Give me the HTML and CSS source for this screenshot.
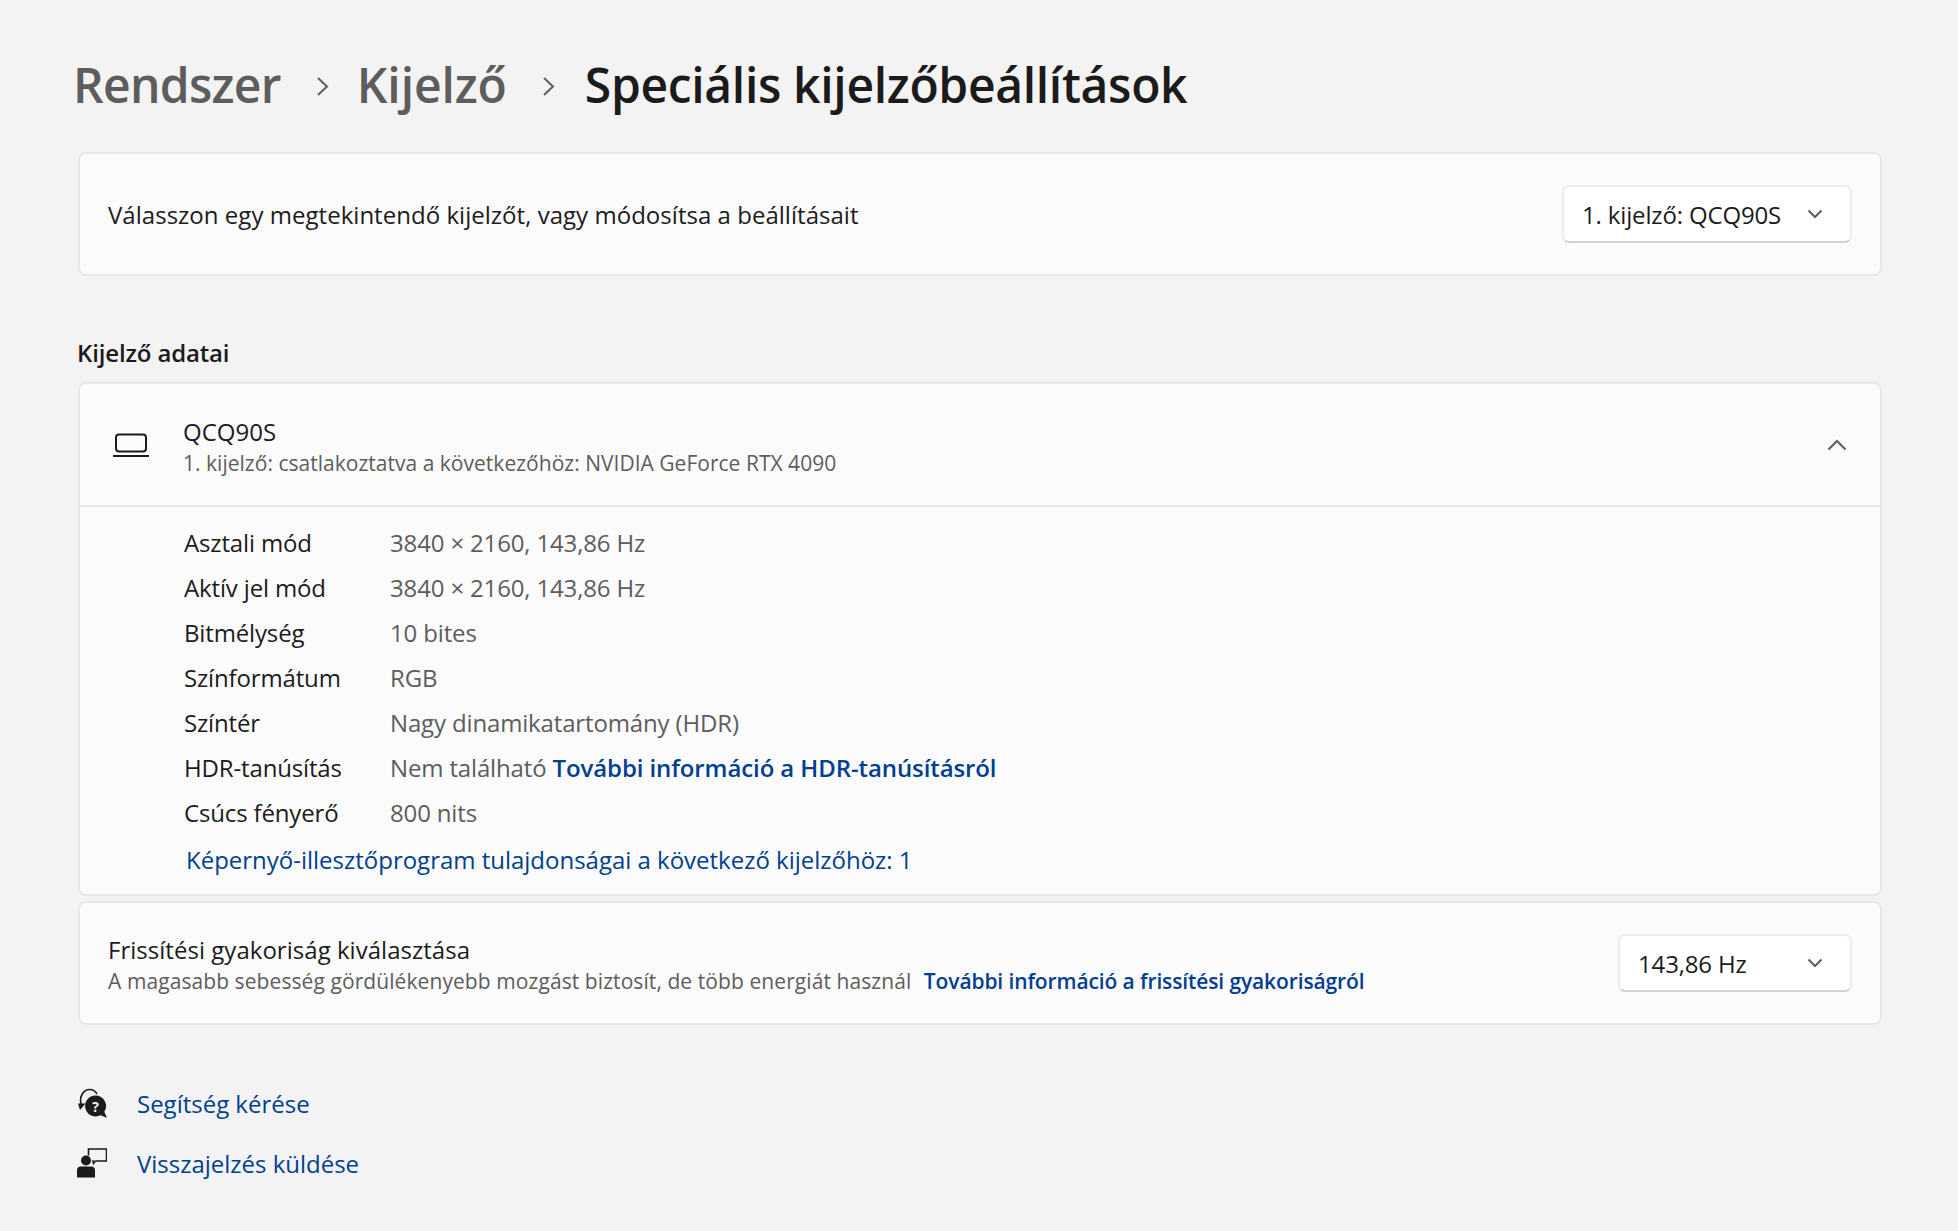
FILE: index.html
```html
<!DOCTYPE html>
<html lang="hu">
<head>
<meta charset="utf-8">
<title>Speciális kijelzőbeállítások</title>
<link rel="stylesheet" href="styles.css">
</head>
<body>
<main class="page">
  <nav class="crumbs">
    <span class="crumb crumb-root">Rendszer</span>
    <svg class="crumb-sep" viewBox="0 0 13 21"><path d="M2 2l9 8.500-9 8.500"/></svg>
    <span class="crumb crumb-mid">Kijelző</span>
    <svg class="crumb-sep" viewBox="0 0 13 21"><path d="M2 2l9 8.500-9 8.500"/></svg>
    <span class="crumb current">Speciális kijelzőbeállítások</span>
  </nav>

  <section class="card row-card">
    <span class="label">Válasszon egy megtekintendő kijelzőt, vagy módosítsa a beállításait</span>
    <div class="select select-display">
      <span>1. kijelző: QCQ90S</span>
      <svg class="chev" viewBox="0 0 16 10"><path d="M1.500 1.500L8 8l6.500-6.500"/></svg>
    </div>
  </section>

  <h2 class="section-title">Kijelző adatai</h2>

  <section class="card info-card">
    <header class="info-head">
      <svg class="laptop" viewBox="0 0 36 24"><rect x="3" y="1.500" width="30" height="17" rx="3"/><path d="M0 23h36"/></svg>
      <div class="info-titles">
        <div class="label">QCQ90S</div>
        <div class="sub">1. kijelző: csatlakoztatva a következőhöz: NVIDIA GeForce RTX 4090</div>
      </div>
      <svg class="chev chev-up" viewBox="0 0 20 12"><path d="M1.500 10.500L10 2l8.500 8.500"/></svg>
    </header>
    <div class="info-body">
      <dl class="specs">
        <dt>Asztali mód</dt><dd>3840 × 2160, 143,86 Hz</dd>
        <dt>Aktív jel mód</dt><dd>3840 × 2160, 143,86 Hz</dd>
        <dt>Bitmélység</dt><dd>10 bites</dd>
        <dt>Színformátum</dt><dd>RGB</dd>
        <dt>Színtér</dt><dd>Nagy dinamikatartomány (HDR)</dd>
        <dt>HDR-tanúsítás</dt><dd>Nem található <a class="strong-link" href="#">További információ a HDR-tanúsításról</a></dd>
        <dt>Csúcs fényerő</dt><dd>800 nits</dd>
      </dl>
      <a class="link driver-link" href="#">Képernyő-illesztőprogram tulajdonságai a következő kijelzőhöz: 1</a>
    </div>
  </section>

  <section class="card row-card refresh-card">
    <div class="refresh-text">
      <div class="label">Frissítési gyakoriság kiválasztása</div>
      <div class="sub">A magasabb sebesség gördülékenyebb mozgást biztosít, de több energiát használ <a class="strong-link sub-link" href="#">További információ a frissítési gyakoriságról</a></div>
    </div>
    <div class="select select-rate">
      <span>143,86 Hz</span>
      <svg class="chev" viewBox="0 0 16 10"><path d="M1.500 1.500L8 8l6.500-6.500"/></svg>
    </div>
  </section>

  <ul class="help">
    <li>
      <svg class="help-icon" viewBox="0 0 30 30">
        <path class="line thin" d="M4 16C2 8 7 1.500 12.500 1.500c3.500 0 6 1.700 7.500 4.500"/>
        <path class="solid" d="M1 15.500h7.500L3 22z"/>
        <path class="solid" d="M18.500 7.500a10.500 10.500 0 0 1 8.800 16.200l2.700 6-6.500-2.400a10.500 10.500 0 1 1-5-19.800z"/>
        <text class="q" x="18.500" y="23.500">?</text>
      </svg>
      <a class="link" href="#">Segítség kérése</a>
    </li>
    <li>
      <svg class="help-icon" viewBox="0 0 30 30">
        <circle class="solid" cx="9" cy="12.500" r="5"/>
        <path class="solid" d="M0 29.500v-7a4 4 0 0 1 4-4h10a4 4 0 0 1 4 4v7z"/>
        <path class="line thin" d="M11.500 7.500V1h18v12H18.500l-2 2.500-.7-3.500"/>
      </svg>
      <a class="link" href="#">Visszajelzés küldése</a>
    </li>
  </ul>
</main>
</body>
</html>
```

FILE: styles.css
```css
* { box-sizing: border-box; }
html, body { margin: 0; background: #f3f3f3; }
body {
  font-family: "Open Sans", "Noto Sans", sans-serif;
  font-size: 24px;
  color: #1b1b1b;
  height: 1231px;
  overflow: hidden;
}
.page { padding: 49px 76px 0 78px; }
.crumbs {
  display: flex;
  align-items: center;
  height: 70px;
  margin-left: -5px;
  margin-bottom: 33px;
  font-size: 48px;
  font-weight: 600;
  color: #5d5d5d;
}
.crumb { white-space: nowrap; }
.crumb-root { letter-spacing: -0.7px; }
.crumb-mid { letter-spacing: -0.1px; }
.crumb.current { color: #1b1b1b; letter-spacing: -0.33px; margin-left: 2px; }
.crumb-sep {
  width: 13px;
  height: 21px;
  margin: 4px 28px 0 35px;
  fill: none;
  stroke: #5d5d5d;
  stroke-width: 2;
}
.card {
  background: #fbfbfb;
  border: 2px solid #e8e8e8;
  border-radius: 8px;
}
.row-card {
  display: flex;
  justify-content: space-between;
  align-items: center;
  height: 124px;
  padding: 0 28px 0 28px;
}
.label { font-size: 24px; letter-spacing: 0.03px; }
.specs dt, .specs dd, .select { font-size: 24px; letter-spacing: -0.15px; }
.sub { font-size: 21px; letter-spacing: 0.02px; color: #5d5d5d; line-height: 28px; margin-top: 1px; }
.refresh-text .sub { letter-spacing: 0.08px; margin-top: 1px; }
.select {
  display: flex;
  align-items: center;
  justify-content: space-between;
  height: 58px;
  padding: 0 27px 0 18px;
  background: #fff;
  border: 2px solid #ececec;
  border-bottom-color: #d2d2d2;
  border-radius: 7px;
}
.select-display { width: 290px; }
.select-rate { width: 234px; }
.chev {
  width: 16px;
  height: 10px;
  fill: none;
  stroke: #5d5d5d;
  stroke-width: 2;
}
.section-title {
  margin: 58px 0 10px -1px;
  height: 38px;
  line-height: 38px;
  font-size: 24px;
  font-weight: 600;
  letter-spacing: -0.15px;
}
.info-head {
  display: flex;
  align-items: center;
  height: 123px;
  padding: 0 33px 0 33px;
  border-bottom: 2px solid #e8e8e8;
}
.laptop {
  width: 36px;
  height: 24px;
  flex: none;
  fill: none;
  stroke: #1b1b1b;
  stroke-width: 2;
}
.info-titles { flex: 1; margin: 3px 0 0 34px; }
.info-titles .label { line-height: 32px; }
.chev-up { width: 20px; height: 12px; }
.info-body { padding: 13px 0 0 104px; height: 387px; }
.specs {
  display: grid;
  grid-template-columns: 206px 1fr;
  grid-auto-rows: 45px;
  align-items: center;
  margin: 0;
}
.specs dt { margin: 0; }
.specs dd { margin: 0; color: #5d5d5d; }
a { text-decoration: none; }
.link { color: #003e92; letter-spacing: -0.01px; }
.strong-link { color: #003e92; font-weight: 600; letter-spacing: -0.1px; }
.sub-link { margin-left: 7px; letter-spacing: -0.12px; }
.driver-link { display: block; margin: 8px 0 0 2px; line-height: 34px; }
.refresh-card { margin-top: 5px; }
.refresh-text { margin-top: 2px; }
.help { list-style: none; margin: 48px 0 0 -1px; padding: 0; }
.help li { display: flex; align-items: center; height: 60px; }
.help-icon { width: 30px; height: 30px; margin-right: 30px; flex: none; }
.line { fill: none; stroke: #1b1b1b; stroke-width: 2; }
.thin { stroke-width: 1.6; }
.solid { fill: #1b1b1b; }
.q { fill: #f3f3f3; font-size: 14px; font-weight: 700; text-anchor: middle; }
```
